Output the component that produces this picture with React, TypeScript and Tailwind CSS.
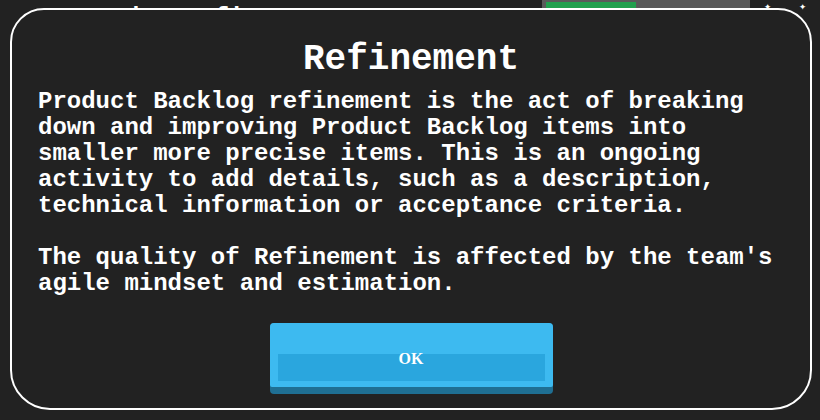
import React from "react";

const bodyLines = [
  "Product Backlog refinement is the act of breaking",
  "down and improving Product Backlog items into",
  "smaller more precise items. This is an ongoing",
  "activity to add details, such as a description,",
  "technical information or acceptance criteria.",
];

const qualityLines = [
  "The quality of Refinement is affected by the team's",
  "agile mindset and estimation.",
];

export default function App() {
  return (
    <div className="relative w-[820px] h-[420px] overflow-hidden bg-[#222222] font-['Liberation_Mono',monospace]">
      {/* page behind the modal */}
      <div className="flex items-start h-[40px]">
        <div className="pl-[85px] pt-[5px] text-[24px] leading-[26px] font-bold text-white">
          Sprint Refinement
        </div>
        <div className="ml-auto flex w-[208px] h-[8px] bg-[#5a5a5a] pl-[4px] pt-[2px]">
          <div className="w-[90px] h-[6px] bg-[#22a04e]" />
        </div>
        <div className="w-[70px] flex justify-around text-white text-[12px] leading-[12px] pt-[1px]">
          <span>✦</span>
          <span>✦</span>
        </div>
      </div>

      {/* modal */}
      <div className="absolute left-[10px] top-[8px] w-[802px] h-[402px] rounded-t-[34px] rounded-b-[40px] border-2 border-white bg-[#222222] flex flex-col">
        <h1 className="mt-[32px] text-center text-[36px] leading-[36px] font-bold text-white">
          Refinement
        </h1>
        <div className="mt-[11px] pl-[26px] text-[24px] leading-[26px] font-bold text-white whitespace-pre">
          {bodyLines.map((l) => (
            <div key={l}>{l}</div>
          ))}
          <div>&nbsp;</div>
          {qualityLines.map((l) => (
            <div key={l}>{l}</div>
          ))}
        </div>
        <div className="mt-auto mb-[14px] flex justify-center">
          <button className="w-[283px] h-[71px] rounded-[4px] bg-[#1f6f93] pb-[7px]">
            <div className="h-full rounded-t-[4px] rounded-b-[2px] bg-[#3dbaf0] flex flex-col pt-[31px] px-[8px]">
              <div className="h-[27px] bg-[#2aa6de] flex items-center justify-center">
                <span className="-mt-[17px] font-['Liberation_Serif',serif] font-bold text-[16px] leading-[16px] text-white">
                  OK
                </span>
              </div>
            </div>
          </button>
        </div>
      </div>
    </div>
  );
}
